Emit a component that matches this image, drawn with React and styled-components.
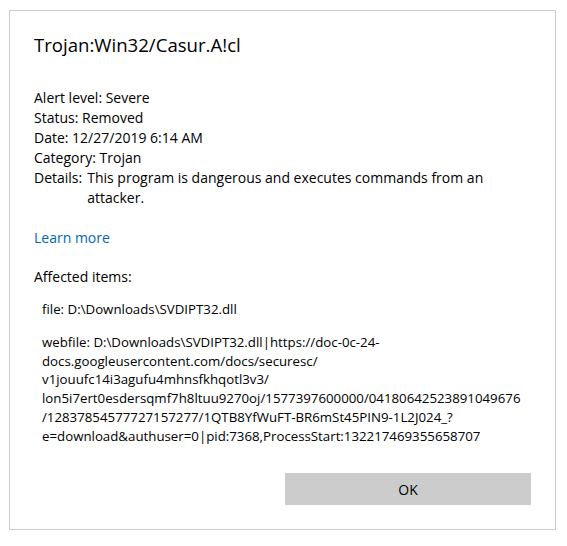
import styled, { createGlobalStyle } from 'styled-components';

const GlobalStyle = createGlobalStyle`
  html, body {
    margin: 0;
    padding: 0;
    background: #ffffff;
  }
  body {
    font-family: "Open Sans", "Noto Sans", sans-serif;
    color: #000000;
  }
`;

const Page = styled.div`
  width: 567px;
  height: 546px;
  padding: 10px 0 0 9px;
  box-sizing: border-box;
`;

const Dialog = styled.div`
  width: 547px;
  height: 520px;
  box-sizing: border-box;
  border: 1px solid #cccccc;
  background: #ffffff;
  padding: 20px 24px 23px 24px;
  display: flex;
  flex-direction: column;
`;

const Title = styled.h1`
  margin: 0;
  font-size: 18.6px;
  line-height: 28px;
  font-weight: 400;
`;

const Body = styled.div`
  margin-top: 29px;
  font-size: 14px;
  line-height: 20px;
`;

const Line = styled.div`
  white-space: nowrap;
`;

const Row = styled.div`
  display: flex;
  gap: 5px;
`;

const RowValue = styled.div`
  display: flex;
  flex-direction: column;
`;

const Link = styled.a`
  display: block;
  margin-top: 20px;
  color: #0067b8;
  text-decoration: none;
  font-size: 14px;
  line-height: 20px;
`;

const Heading = styled.div`
  margin-top: 19px;
  font-size: 14px;
  line-height: 20px;
`;

const Item = styled.div`
  margin-top: ${(p) => p.$gap}px;
  padding-left: 8px;
  font-size: 13.28px;
  line-height: ${(p) => p.$lh}px;
`;

const Footer = styled.div`
  margin-top: auto;
  display: flex;
  justify-content: flex-end;
`;

const Button = styled.button`
  width: 246px;
  height: 32px;
  margin-bottom: 1px;
  border: none;
  background: #cccccc;
  font-family: inherit;
  font-size: 14px;
  color: #000000;
  padding: 0;
`;

const webLines = [
  'webfile: D:\\Downloads\\SVDIPT32.dll|https://doc-0c-24-',
  'docs.googleusercontent.com/docs/securesc/',
  'v1jouufc14i3agufu4mhnsfkhqotl3v3/',
  'lon5i7ert0esdersqmf7h8ltuu9270oj/1577397600000/04180642523891049676',
  '/12837854577727157277/1QTB8YfWuFT-BR6mSt45PIN9-1L2J024_?',
  'e=download&authuser=0|pid:7368,ProcessStart:132217469355658707',
];

export default function App() {
  return (
    <>
      <GlobalStyle />
      <Page>
        <Dialog>
          <Title>Trojan:Win32/Casur.A!cl</Title>
          <Body>
            <Line>Alert level: Severe</Line>
            <Line>Status: Removed</Line>
            <Line>Date: 12/27/2019 6:14 AM</Line>
            <Line>Category: Trojan</Line>
            <Row>
              <span>Details:</span>
              <RowValue>
                <Line>This program is dangerous and executes commands from an</Line>
                <Line>attacker.</Line>
              </RowValue>
            </Row>
          </Body>
          <Link href="#">Learn more</Link>
          <Heading>Affected items:</Heading>
          <Item $gap={12} $lh={20}>
            <Line>file: D:\Downloads\SVDIPT32.dll</Line>
          </Item>
          <Item $gap={14} $lh={18.7}>
            {webLines.map((l) => (
              <Line key={l}>{l}</Line>
            ))}
          </Item>
          <Footer>
            <Button>OK</Button>
          </Footer>
        </Dialog>
      </Page>
    </>
  );
}
